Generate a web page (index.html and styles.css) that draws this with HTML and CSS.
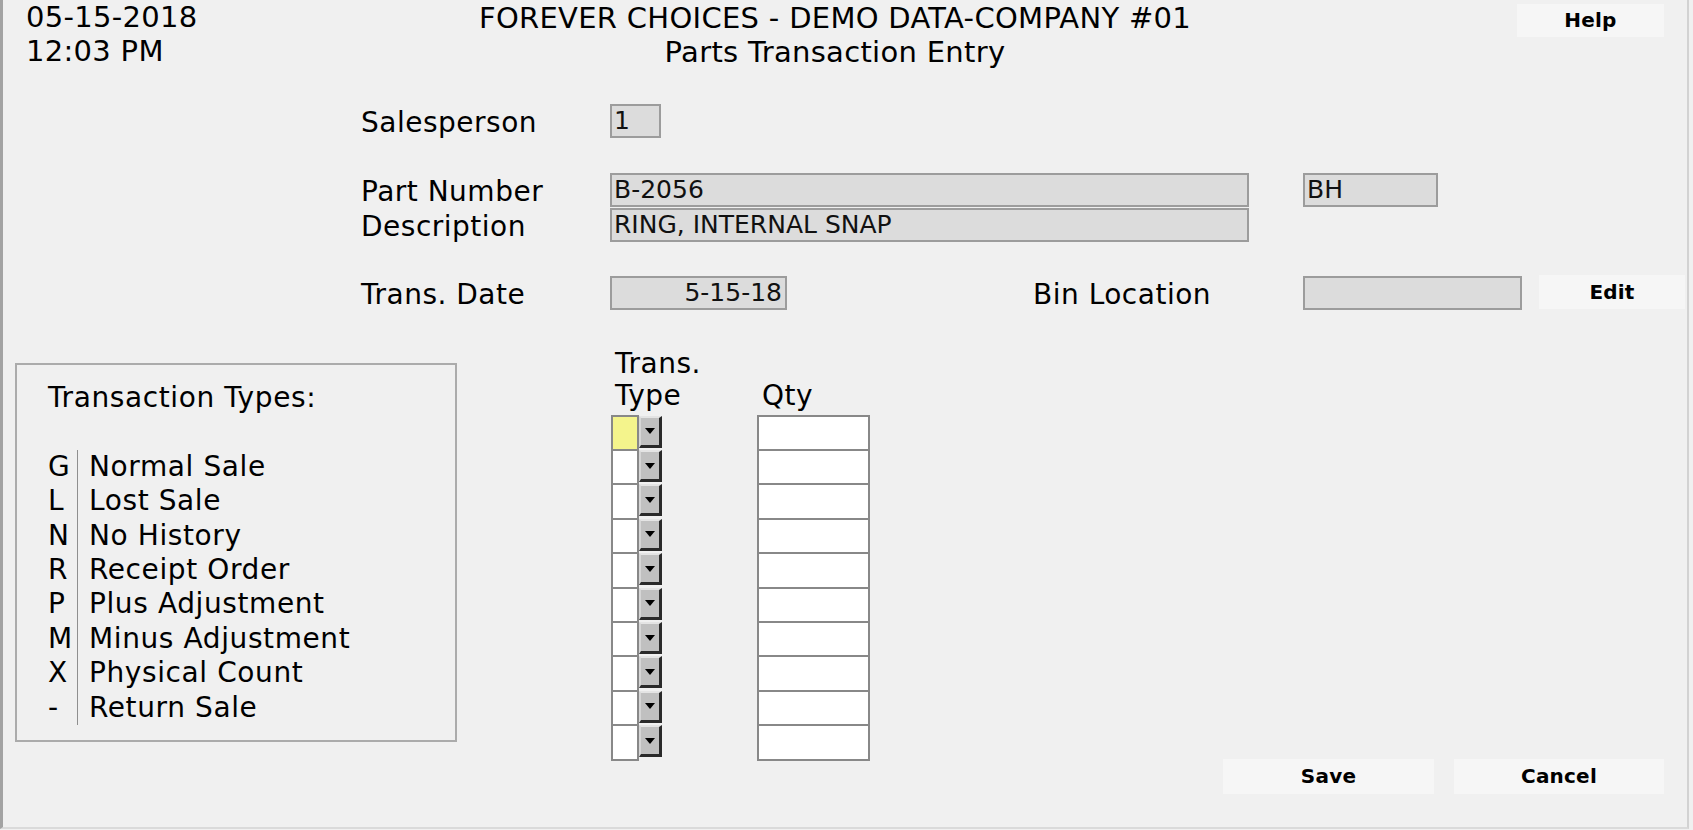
FILE: index.html
```
<!DOCTYPE html>
<html lang="en">

<head>
    <meta charset="UTF-8">
    <meta name="viewport" content="width=device-width, initial-scale=1.0">
    <title>Parts Transaction Entry</title>
    <link rel="stylesheet" href="styles.css">
</head>

<body>
    <div class="screen">
        <div class="top_bar">
            <div class="stamp">05-15-2018<br>12:03 PM</div>
            <div class="title">FOREVER CHOICES - DEMO DATA-COMPANY #01<br>Parts Transaction Entry</div>
            <div class="help_box"><button class="btn btn_help">Help</button></div>
        </div>

        <div class="form">
            <div class="row row_sales">
                <div class="label">Salesperson</div>
                <div class="field f_sales">1</div>
            </div>
            <div class="row row_part">
                <div class="label">Part Number</div>
                <div class="field f_part">B-2056</div>
                <div class="field f_bh">BH</div>
            </div>
            <div class="row row_desc">
                <div class="label">Description</div>
                <div class="field f_desc">RING, INTERNAL SNAP</div>
            </div>
            <div class="row row_date">
                <div class="label">Trans. Date</div>
                <div class="field f_date">5-15-18</div>
                <div class="label bin_label">Bin Location</div>
                <div class="field f_bin"></div>
                <button class="btn btn_edit">Edit</button>
            </div>
        </div>

        <div class="lower">
            <div class="legend">
                <div class="legend_head">Transaction Types:</div>
                <div class="types">
                    <div class="code">G</div><div class="desc">Normal Sale</div>
                    <div class="code">L</div><div class="desc">Lost Sale</div>
                    <div class="code">N</div><div class="desc">No History</div>
                    <div class="code">R</div><div class="desc">Receipt Order</div>
                    <div class="code">P</div><div class="desc">Plus Adjustment</div>
                    <div class="code">M</div><div class="desc">Minus Adjustment</div>
                    <div class="code">X</div><div class="desc">Physical Count</div>
                    <div class="code">-</div><div class="desc">Return Sale</div>
                </div>
            </div>

            <div class="entry" id="entry">
                <div class="type_head">Trans.<br>Type</div>
                <div class="qty_head">Qty</div>
            </div>
        </div>

        <div class="actions">
            <button class="btn btn_save">Save</button>
            <button class="btn btn_cancel">Cancel</button>
        </div>
    </div>

    <script>
        // ten empty transaction lines, the first one has focus
        const entry = document.querySelector("#entry");
        for (let i = 0; i < 10; i++) {
            const combo = document.createElement("div");
            combo.className = "combo";
            combo.innerHTML = '<div class="pick' + (i === 0 ? ' active' : '') + '"></div><div class="arrow"></div>';
            const qty = document.createElement("div");
            qty.className = "qty";
            entry.appendChild(combo);
            entry.appendChild(qty);
        }
    </script>
</body>
</html>
```

FILE: styles.css
```
* {
    box-sizing: border-box;
}

html,
body {
    margin: 0;
    background-color: #f0f0f0;
}

body {
    font-family: "DejaVu Sans", Verdana, sans-serif;
    color: #000;
}

.screen {
    width: 1689px;
    height: 829px;
    border-left: 3px solid #a3a3a3;
    border-right: 2px solid #d2d2d2;
    border-bottom: 2px solid #dadada;
}

.top_bar {
    display: grid;
    grid-template-columns: 444px 730px 1fr;
    padding-left: 23px;
    font-size: 29px;
    line-height: 34px;
    letter-spacing: 0.3px;
}

.title {
    text-align: center;
    padding-top: 1px;
}

.help_box {
    justify-self: end;
    margin-right: 23px;
}

.btn {
    font-family: "DejaVu Sans", Verdana, sans-serif;
    font-weight: bold;
    font-size: 20px;
    letter-spacing: 0.2px;
    color: #000;
    background-color: #f6f6f6;
    border: 0;
    padding: 0;
}

.btn_help {
    width: 147px;
    height: 33px;
}

/* header fields */
.form {
    padding-left: 358px;
}

.row {
    display: flex;
    align-items: flex-start;
}

.label {
    width: 249px;
    height: 34px;
    font-size: 28px;
    line-height: 34px;
    letter-spacing: 0.5px;
    padding-top: 2px;
    white-space: nowrap;
}

.row_sales {
    margin-top: 35px;
}

.row_part {
    margin-top: 35px;
}

.row_desc {
    margin-top: 1px;
}

.row_date {
    margin-top: 34px;
}

.field {
    height: 34px;
    border: 2px solid #9c9c9c;
    background-color: #dcdcdc;
    font-size: 25px;
    line-height: 30px;
    padding: 0 3px 0 2px;
    white-space: nowrap;
    color: #111;
}

.f_sales {
    width: 51px;
}

.f_part,
.f_desc {
    width: 639px;
}

.f_bh {
    width: 135px;
    margin-left: 54px;
}

.f_date {
    width: 177px;
    text-align: right;
}

.bin_label {
    width: 270px;
    margin-left: 246px;
}

.f_bin {
    width: 219px;
}

.btn_edit {
    width: 146px;
    height: 34px;
    margin-left: 17px;
    margin-top: -1px;
}

/* legend + entry grid */
.lower {
    display: flex;
    align-items: flex-start;
    margin-top: 38px;
}

.legend {
    width: 442px;
    margin-left: 12px;
    margin-top: 15px;
    border: 2px solid #ababab;
    padding: 16px 0 15px 31px;
    font-size: 28px;
    line-height: 34.4px;
    letter-spacing: 0.6px;
}

.legend_head {
    margin-bottom: 34.4px;
}

.types {
    display: grid;
    grid-template-columns: 29px auto;
}

.desc {
    border-left: 1px solid #8f8f8f;
    padding-left: 11px;
}

.entry {
    margin-left: 154px;
    display: grid;
    grid-template-columns: 51px 113px;
    grid-template-rows: 66.7px;
    grid-auto-rows: 34.4px;
    column-gap: 95px;
    font-size: 28px;
    letter-spacing: 0.5px;
}

.type_head {
    line-height: 32px;
    padding-left: 4px;
    white-space: nowrap;
}

.qty_head {
    line-height: 32px;
    padding-top: 32px;
    padding-left: 5px;
}

.combo {
    display: flex;
    height: 36.4px;
}

.pick {
    width: 28px;
    border: 2px solid #888;
    background-color: #fff;
}

.pick.active {
    background-color: #f4f48c;
}

.arrow {
    width: 23px;
    height: 32px;
    margin-top: 1px;
    background-color: #c0c0c0;
    border-style: solid;
    border-width: 2px 3px 3px 2px;
    border-color: #e4e4e4 #2a2a2a #2a2a2a #d6d6d6;
    display: flex;
    align-items: center;
    justify-content: center;
}

.arrow::after {
    content: "";
    border-left: 5px solid transparent;
    border-right: 5px solid transparent;
    border-top: 6px solid #000;
}

.qty {
    height: 36.4px;
    border: 2px solid #888;
    background-color: #fff;
}

.actions {
    display: flex;
    justify-content: flex-end;
    gap: 20px;
    padding-right: 23px;
}

.btn_save {
    width: 211px;
    height: 35px;
}

.btn_cancel {
    width: 210px;
    height: 35px;
}
```
